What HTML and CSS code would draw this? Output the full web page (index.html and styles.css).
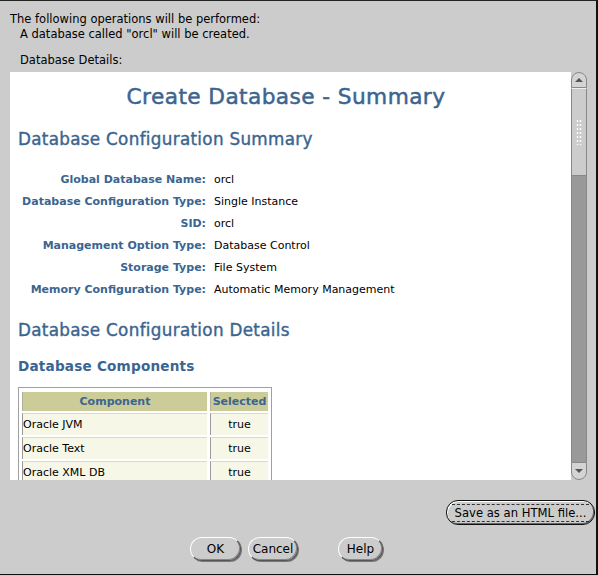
FILE: index.html
```html
<!DOCTYPE html>
<html lang="en">
<head>
  <meta charset="UTF-8" />
  <title>Summary</title>
  <link rel="stylesheet" href="styles.css">
</head>
<body>
  <div class="dialog">
    <div class="intro">
      <p>The following operations will be performed:</p>
      <p class="indent">A database called "orcl" will be created.</p>
      <p class="indent details-label">Database Details:</p>
    </div>

    <div class="panel">
      <div class="viewport">
        <h1>Create Database - Summary</h1>
        <h2>Database Configuration Summary</h2>
        <div class="summary">
          <span class="label">Global Database Name:</span><span>orcl</span>
          <span class="label">Database Configuration Type:</span><span>Single Instance</span>
          <span class="label">SID:</span><span>orcl</span>
          <span class="label">Management Option Type:</span><span>Database Control</span>
          <span class="label">Storage Type:</span><span>File System</span>
          <span class="label">Memory Configuration Type:</span><span>Automatic Memory Management</span>
        </div>
        <h2 class="details">Database Configuration Details</h2>
        <h3>Database Components</h3>
        <table class="components">
          <tr><th class="col-name">Component</th><th class="col-sel">Selected</th></tr>
          <tr><td>Oracle JVM</td><td class="center">true</td></tr>
          <tr><td>Oracle Text</td><td class="center">true</td></tr>
          <tr><td>Oracle XML DB</td><td class="center">true</td></tr>
        </table>
      </div>
      <div class="scrollbar">
        <div class="arrow up"></div>
        <div class="thumb"><span class="grip"></span></div>
        <div class="track"></div>
        <div class="arrow down"></div>
      </div>
    </div>

    <div class="save-row">
      <button class="btn save"><span class="focus">Save as an HTML file...</span></button>
    </div>
    <div class="actions">
      <button class="btn ok">OK</button>
      <button class="btn cancel">Cancel</button>
      <button class="btn help">Help</button>
    </div>
  </div>
</body>
</html>
```

FILE: styles.css
```css
body {
  margin: 0;
  font-family: 'DejaVu Sans', sans-serif;
  font-size: 11px;
  background: #cccccc;
}

.dialog {
  width: 596px;
  height: 573px;
  background: #cccccc;
  border-top: 1px solid #222;
  border-right: 2px solid #111;
  border-bottom: 1px solid #111;
}

.intro {
  padding: 11px 0 0 10px;
  height: 60px;
  font-size: 11.5px;
}

.intro p {
  margin: 0;
  line-height: 15px;
}

.indent {
  padding-left: 10px;
}

.details-label {
  margin-top: 11px !important;
}

.panel {
  display: flex;
  margin-left: 10px;
  width: 577px;
  height: 408px;
}

.viewport {
  flex: 1;
  background: #fff;
  overflow: hidden;
  color: #3b6590;
}

h1 {
  margin: 12px 0 0;
  padding-right: 9px;
  text-align: center;
  font-size: 21.7px;
  font-weight: normal;
  line-height: 26px;
  letter-spacing: 0.4px;
  -webkit-text-stroke: 0.5px #3b6590;
}

h2 {
  margin: 19px 0 0 8px;
  font-size: 16.8px;
  font-weight: normal;
  line-height: 20px;
  letter-spacing: 0.3px;
  -webkit-text-stroke: 0.4px #3b6590;
}

h2.details {
  margin-top: 19px;
}

h3 {
  margin: 17px 0 0 8px;
  font-size: 13.6px;
  font-weight: bold;
  line-height: 18px;
  letter-spacing: 0.2px;
}

.summary {
  display: grid;
  grid-template-columns: 196px 1fr;
  column-gap: 8px;
  margin-top: 20px;
  font-size: 11px;
  line-height: 22px;
}

.summary span {
  color: #000;
}

.summary .label {
  text-align: right;
  font-weight: bold;
  color: #3b6590;
}

.components {
  margin: 12px 0 0 8px;
  width: 254px;
  border: 1px solid #a0a0a0;
  border-spacing: 3px 2px;
  padding: 2px 0 0;
  font-size: 11px;
}

.components th {
  background: #cccc99;
  color: #3b6590;
  font-weight: bold;
  height: 19px;
  padding: 0;
  border-left: 1px solid #b0b09a;
}

.col-name {
  width: 184px;
}

.components td {
  background: #f7f7e7;
  color: #000;
  height: 21px;
  padding: 0;
  border-left: 1px solid #9a9a9a;
  border-top: 1px solid #d8d8d8;
}

.components td.center {
  text-align: center;
}

.scrollbar {
  width: 16px;
  display: flex;
  flex-direction: column;
  background: #cccccc;
}

.arrow {
  height: 16px;
  box-sizing: border-box;
  border: 1px solid #888;
  background: #d4d4d4;
  display: flex;
  align-items: center;
  justify-content: center;
}

.arrow::after {
  content: '';
  border-left: 4px solid transparent;
  border-right: 4px solid transparent;
}

.arrow.up {
  border-radius: 8px 8px 0 0;
}

.arrow.up::after {
  border-bottom: 4px solid #555;
}

.arrow.down {
  height: 18px;
  border-radius: 0 0 8px 8px;
}

.arrow.down::after {
  border-top: 4px solid #555;
}

.thumb {
  height: 88px;
  box-sizing: border-box;
  border: 1px solid #888;
  border-top: 1px solid #eee;
  background: #cccccc;
  display: flex;
  align-items: center;
  justify-content: center;
}

.grip {
  width: 6px;
  height: 26px;
  background-image: radial-gradient(circle, #fff 0.8px, transparent 1.2px);
  background-size: 3px 4px;
}

.track {
  flex: 1;
  background: #999999;
  border-left: 1px solid #888;
  border-right: 1px solid #888;
}

.save-row {
  display: flex;
  justify-content: flex-end;
  margin-top: 20px;
  padding-right: 1px;
}

.btn {
  font-family: 'DejaVu Sans', sans-serif;
  font-size: 12px;
  color: #000;
  background: #cccccc;
  border: 1px solid #555;
  border-top-color: #fff;
  border-left-color: #fff;
  box-shadow: inset -1px -1px 0 #888, 1px 1px 0 #777;
  border-radius: 12px;
  height: 24px;
  padding: 0;
}

.save {
  width: 149px;
  height: 25px;
  border: 1px solid #111;
  box-shadow: inset 1px 1px 0 #fff, inset -1px -1px 0 #666;
}

.save .focus {
  display: inline-block;
  padding: 1px 3px;
  border-top: 1px dashed #333;
  border-bottom: 1px dashed #333;
  line-height: 14px;
  font-size: 11.6px;
}

.actions {
  display: flex;
  margin-top: 12px;
  padding-left: 190px;
  gap: 7px;
}

.ok {
  width: 51px;
}

.cancel {
  width: 50px;
}

.help {
  width: 45px;
  margin-left: 33px;
}
```
